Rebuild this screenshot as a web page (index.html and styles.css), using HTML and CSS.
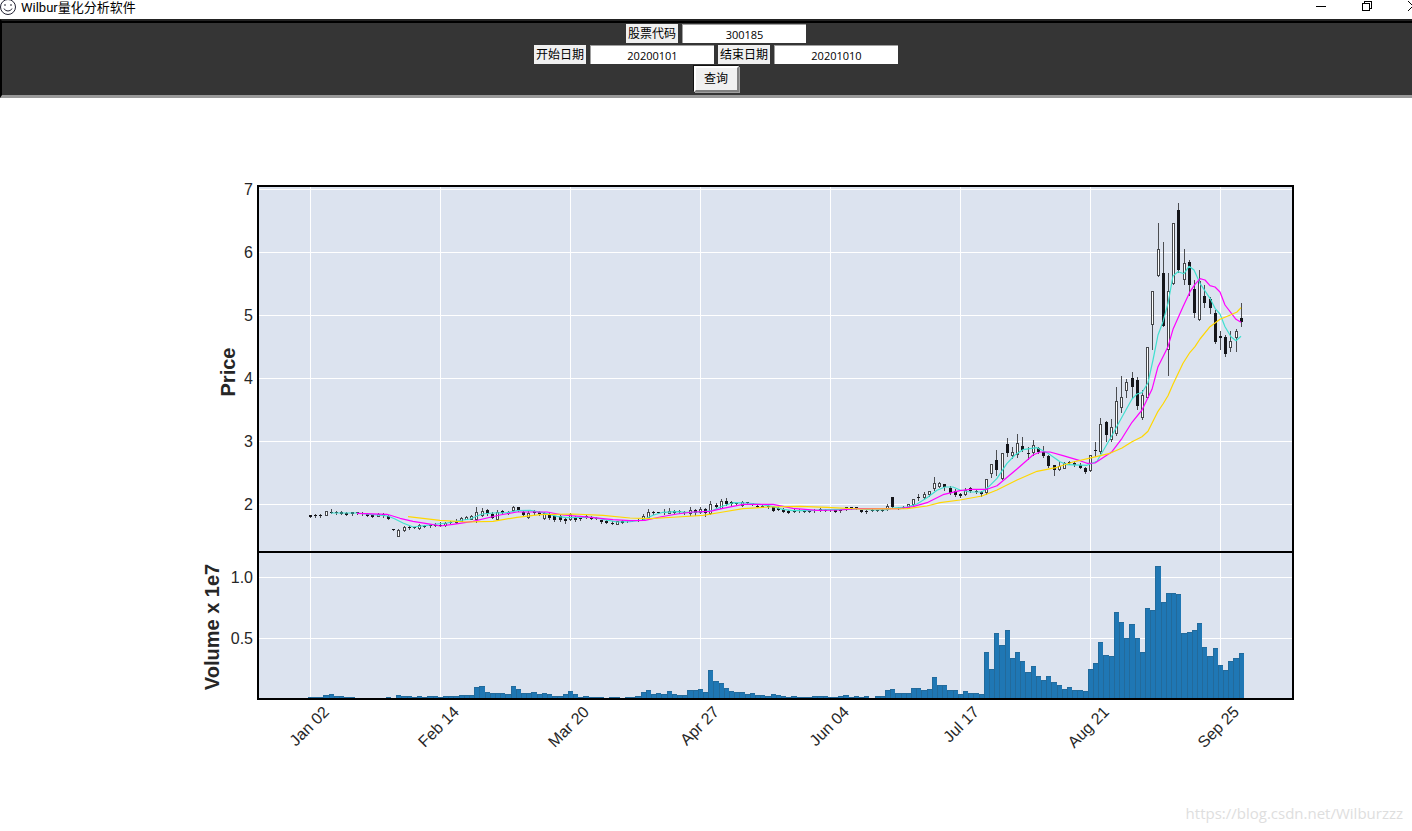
FILE: index.html
```html
<!DOCTYPE html>
<html lang="zh-CN">
<head>
<meta charset="utf-8">
<title>Wilbur量化分析软件</title>
<link rel="stylesheet" href="styles.css">
</head>
<body>
<div class="window">
  <header class="titlebar">
    <svg class="app-icon" viewBox="0 0 16 16" aria-hidden="true">
      <circle cx="8" cy="8" r="7.5"/>
      <path d="M5 5v2M11 5v2M4 9.5Q5 12 8 12T12 9.5"/>
    </svg>
    <h1 class="title">Wilbur量化分析软件</h1>
    <div class="controls">
      <button class="control" type="button" aria-label="最小化"><svg viewBox="0 0 12 12"><path d="M1 6.5h10"/></svg></button>
      <button class="control" type="button" aria-label="还原"><svg viewBox="0 0 12 12"><path d="M1.5 3.5h7v7h-7zM3.5 3.5v-2h7v7h-2"/></svg></button>
      <button class="control" type="button" aria-label="关闭"><svg viewBox="0 0 12 12"><path d="M1 1l10 10M11 1L1 11"/></svg></button>
    </div>
  </header>
  <form class="toolbar">
    <div class="row">
      <label class="label" for="code">股票代码</label>
      <input class="entry" id="code" type="text" value="300185">
    </div>
    <div class="row">
      <label class="label" for="start">开始日期</label>
      <input class="entry" id="start" type="text" value="20200101">
      <label class="label" for="end">结束日期</label>
      <input class="entry" id="end" type="text" value="20201010">
    </div>
    <button class="query" type="button">查询</button>
  </form>
  <main class="figure">
    <svg class="chart" id="chart" viewBox="0 98 1432 733" role="img" aria-label="Price and volume"></svg>
    <a class="watermark" href="https://blog.csdn.net/Wilburzzz">https://blog.csdn.net/Wilburzzz</a>
  </main>
</div>
<script src="chart.js"></script>
</body>
</html>
```
FILE: styles.css
```css
* { box-sizing: border-box; }

body {
  margin: 0;
  overflow: hidden;
  background: #fff;
  color: #000;
  font: 12px/16px "Open Sans", "Noto Sans CJK SC", sans-serif;
}

/* The window runs 20px past the right edge of the screen. */
.window { width: calc(100% + 20px); }

.titlebar {
  display: flex;
  align-items: flex-start;
  height: 19px;
  gap: 5px;
}
.app-icon {
  width: 16px;
  height: 16px;
  margin-top: -1px;
  fill: #fff;
  stroke: #222233;
  stroke-width: 1;
}
.title {
  margin: 0;
  font: 400 13px/15px Roboto, "Noto Sans CJK SC", sans-serif;
}
.controls { display: flex; margin-left: auto; }
.control {
  display: flex;
  justify-content: center;
  width: 46px;
  height: 16px;
  padding: 0;
  border: 0;
  background: none;
}
.control:last-child { width: 42px; padding-left: 4px; }
.control svg {
  width: 12px;
  height: 12px;
  fill: none;
  stroke: #000;
  shape-rendering: crispEdges;
}

.toolbar {
  display: flex;
  flex-direction: column;
  align-items: center;
  gap: 2px;
  padding: 3px 2px 3px 0;
  border-top: 2px solid #222;
  border-left: 2px solid #000;
  border-bottom: 3px solid #999;
  background: #353535;
  box-shadow: inset 0 2px #000;
}
.row { display: flex; gap: 4px; }
.label {
  width: 52px;
  height: 19px;
  background: #f0f0f0;
  line-height: 19px;
  text-align: center;
}
.entry {
  width: 124px;
  height: 19px;
  padding: 0;
  border: 0 solid #a0a0a0;
  border-width: 1px 0 0 1px;
  background: #fff;
  color: #000;
  font: inherit;
  font-size: 11px;
  text-align: center;
}
.query {
  width: 45px;
  height: 26px;
  padding: 0;
  border: 2px solid;
  border-color: #fff #808080 #808080 #fff;
  background: #f0f0f0;
  box-shadow: -1px -1px #111, 1px 1px #a0a0a0;
  color: #000;
  font: inherit;
}

.figure { position: relative; }
.chart {
  display: block;
  width: 100%;
  font-family: "Liberation Sans", Arial, sans-serif;
}
.plot { fill: #dce3ef; }
.grid { fill: none; stroke: #fff; stroke-width: 1; shape-rendering: crispEdges; }
.frame { fill: none; stroke: #000; stroke-width: 2; shape-rendering: crispEdges; }
.tick { fill: #262626; font-size: 16px; }
.tick-end { text-anchor: end; }
.axis { fill: #262626; font-size: 20px; font-weight: 700; text-anchor: middle; }
.bar { fill: #1f77b4; shape-rendering: crispEdges; }
.bar-edge { fill: none; stroke: #226a9b; stroke-width: 1; shape-rendering: crispEdges; }
.wick { stroke: #4b4d51; stroke-width: 1; shape-rendering: crispEdges; }
.up { fill: #fff; stroke: #45474b; stroke-width: 1; shape-rendering: crispEdges; }
.down { fill: #14151a; shape-rendering: crispEdges; }
.ma { fill: none; stroke-width: 1.2; stroke-linejoin: round; }
.ma-fast { stroke: #40e0d0; }
.ma-mid { stroke: #ff00ff; }
.ma-slow { stroke: #ffd700; }

.watermark {
  position: absolute;
  right: 29px;
  bottom: 8px;
  color: #dedede;
  font: 15px/20px "Open Sans", sans-serif;
  text-decoration: none;
}
```
FILE: chart.js
```js
// One entry per trading day: u(p) or d(own), then high, body top, body bottom, low.
const candles = `
d515,515,517,517 d514,515,516,517 d514,515,516,517 u511,511,515,515 d509,512,513,513
d511,512,513,514 d511,512,514,514 d512,513,515,515 d512,512,514,515 d512,512,513,514
d512,513,514,515 d513,514,516,516 d514,514,517,517 u513,514,516,516 d513,514,516,517
d515,516,519,519 d529,529,530,530 u529,530,536,536 u526,527,530,531 d526,527,528,529
d527,527,528,528 u524,525,528,529 d525,526,527,527 d525,525,526,527 d523,525,526,526
d522,525,526,526 u522,523,525,526 d521,522,523,523 u519,521,522,523 u517,518,521,521
u516,517,519,519 u515,516,519,519 u507,512,519,522 u508,511,515,516 d509,510,514,515
d512,514,518,518 u510,512,519,519 d510,511,513,514 d511,512,514,514 u506,507,510,511
d507,507,510,511 d511,512,515,516 u511,513,517,518 d510,511,513,514 d511,512,514,515
u512,513,518,519 d513,514,518,519 d515,516,520,521 d514,516,520,521 d517,519,521,523
u513,514,519,520 d516,517,520,521 d516,517,519,520 d515,516,517,518 d516,517,519,519
d517,518,519,519 d520,520,522,523 d520,521,523,523 d521,523,524,524 u521,521,524,524
d520,521,523,523 d520,520,521,522 d520,520,521,521 d519,520,521,521 u514,516,519,519
u509,512,517,517 d511,512,513,514 d512,512,513,513 d509,512,513,514 u508,511,513,513
d510,511,513,513 d510,511,512,513 d511,512,513,514 u507,510,513,515 d509,510,513,515
u507,509,512,513 d508,509,513,516 u501,504,513,514 d503,505,507,508 u499,501,508,508
d498,501,504,505 d501,502,504,505 d503,503,504,505 u501,502,505,506 d502,502,503,504
d503,503,504,505 d505,506,507,507 u505,506,507,507 d505,506,507,508 d506,507,511,511
d507,508,510,510 d508,509,512,512 d510,511,513,513 d509,510,512,512 d509,510,511,512
d510,511,512,512 d510,511,512,512 d509,510,511,512 d508,509,511,511 d509,510,511,511
d509,509,510,511 d509,510,512,512 d509,510,511,512 d508,507,508,510 d507,507,508,509
d507,507,509,509 d510,510,512,512 d510,511,512,513 d509,510,511,511 d510,510,511,511
d509,510,511,511 u504,506,509,510 d497,497,507,508 d507,508,509,509 d506,507,508,508
u504,504,507,508 u499,499,504,505 d494,497,498,500 u492,494,497,499 u491,491,494,496
u477,483,488,490 u482,483,486,487 d484,484,487,490 d486,488,493,494 d489,491,495,496
d493,494,496,497 u488,490,494,495 d487,488,491,492 d490,491,492,493 d491,492,494,496
u479,479,492,494 u464,464,473,477 d450,460,470,475 u453,453,478,479 d438,444,453,456
u447,452,455,458 u434,443,454,457 d437,446,450,451 d447,453,454,459 u440,445,452,455
d447,448,452,453 d446,452,456,457 d455,456,466,467 d465,465,470,475 u461,466,469,470
u462,463,468,468 d461,462,463,464 d461,463,465,466 d463,465,468,468 d467,468,472,473
u455,455,470,471 d442,450,451,456 u418,424,451,453 d421,422,435,441 u419,427,439,441
u387,401,433,435 u376,397,407,412 u379,382,390,397 d372,378,387,397 d377,380,406,409
u390,395,417,419 u347,347,397,398 u291,291,324,349 u223,249,275,276 d242,273,326,326
u273,291,349,375 u223,223,283,284 d203,210,270,272 u249,263,279,284 d260,262,285,295
d280,289,313,317 u270,281,319,320 d285,296,303,307 d297,299,308,313 d310,313,342,343
d331,336,338,349 d335,337,354,356 u331,341,347,351 u329,331,337,351 d303,318,322,326
`.trim().split(/\s+/).map(s => [s[0], ...s.slice(1).split(',').map(Number)]);

const volumes = [
  1,1,1,3,4,2,2,1,1,0,0,0,0,0,0,1,0,3,2,2,1,2,1,2,2,1,2,2,2,3,3,3,11,12,6,5,5,5,4,12,
  9,5,5,6,4,5,4,2,2,4,7,4,1,2,1,1,1,0,1,1,0,1,1,2,6,8,4,5,4,7,4,3,3,8,8,9,6,28,17,15,
  10,7,6,6,4,5,3,3,2,4,3,2,1,2,1,1,1,2,2,2,1,1,2,3,1,2,1,2,0,2,2,8,9,5,5,5,10,10,8,9,
  21,13,13,8,8,4,7,5,5,4,46,29,65,53,68,40,46,37,26,32,22,18,22,16,13,9,11,8,8,7,
  29,35,56,43,42,86,76,60,74,60,46,90,88,132,96,105,105,104,65,66,68,75,51,42,50,33,28,37,40,45
];

const averages = {
  'ma-fast': '331,513 356,513 373,514.7 388,516 395,519 403,523 413,527 425,525.7 437,524 447,523 457,521 470,519 482,514 493,513 507,512.7 517,510.7 530,510.3 543,512.7 557,516.3 567,517.7 580,517.3 593,517.3 603,519.3 617,522 630,521.7 643,520 653,515.3 663,512.3 677,511.7 687,512.3 700,512 712,510.7 723,506 733,502.7 747,503 760,504.3 773,506.7 783,509.3 793,510.7 810,510.7 827,509.7 843,509.3 860,508.7 873,510 887,509.7 893,508 907,507 917,504 927,497.7 937,490.3 945,487 953,487 960,490 970,492 982,492 988,487.3 997,478.3 1007,463.3 1015,455 1023,449.7 1037,447.7 1048,453.3 1060,461.7 1067,464.7 1087,465.3 1097,461.3 1110,439 1122,417 1132,399 1137,394 1142,392.7 1148,382.7 1153,360 1158,335 1163,321.7 1168,303.3 1173,276 1178,271.7 1184,273.7 1189,266.3 1194,270 1200,283.3 1210,298.3 1215,308.3 1220,314 1225,326.7 1231,336.7 1236,340.7 1241,336.3',
  'ma-mid': '357,513.3 387,514.3 400,518.3 413,521.3 433,524.7 440,526 453,524.3 473,521.3 487,518 500,515 517,512 547,512 563,515 583,516.7 613,519.7 630,520.7 645,520.3 660,517 677,514 693,512 710,511.3 723,508.3 743,504.3 773,504.3 793,508.3 817,510.3 840,510 857,508.7 900,508.7 913,506.7 927,502.7 943,494.7 960,490.7 970,489.3 987,489.3 997,485.7 1017,469 1033,455 1040,452 1050,452 1063,455.7 1080,460.7 1087,463.3 1095,463 1112,451.7 1122,438.3 1132,422.3 1142,410 1152,389.3 1158,366.7 1168,346.7 1173,329.3 1183,306.7 1190,291.7 1195,284.3 1200,278.7 1205,280 1210,285.7 1215,287 1220,292 1225,305 1236,319.3 1241,322.3',
  'ma-slow': '408,516.7 440,520.3 467,522 493,521.3 517,517.3 540,514.7 573,514 603,515.3 630,518 650,518.7 677,517 703,515.3 723,512 743,508.7 769,507 800,506.3 827,507.3 860,509 907,508.7 927,506 940,502.7 960,500 982,496 997,490 1017,480 1037,471.3 1057,467.3 1073,462 1093,457.3 1110,453.3 1122,448 1132,441.7 1142,436.7 1148,431.3 1153,421.3 1158,411.3 1163,404 1168,395.7 1173,384.3 1183,363.3 1190,352.3 1195,346.7 1200,339 1210,326.7 1220,319.3 1231,314.7 1237,312 1241,307.7'
};

const days = ['Jan 02', 'Feb 14', 'Mar 20', 'Apr 27', 'Jun 04', 'Jul 17', 'Aug 21', 'Sep 25'];
const plot = { left: 258, right: 1293, top: 186, split: 552, bottom: 699 };
const step = 5.2;
const first = 310.4;
const out = [];

out.push(`<rect class="plot" x="${plot.left}" y="${plot.top}" width="${plot.right - plot.left}" height="${plot.bottom - plot.top}"/>`);

days.forEach((day, i) => {
  const x = 310 + i * 130;
  out.push(`<path class="grid" d="M${x + 0.5} ${plot.top}V${plot.bottom}"/>`);
  out.push(`<text class="tick tick-end" transform="translate(${x + 20} 713) rotate(-45)">${day}</text>`);
});

for (let p = 2; p <= 7; p++) {
  const y = 504 - (p - 2) * 63;
  out.push(`<path class="grid" d="M${plot.left} ${y + 0.5}H${plot.right}"/>`);
  out.push(`<text class="tick tick-end" x="253" y="${y + 6}">${p}</text>`);
}
[['1.0', 577], ['0.5', 638]].forEach(([label, y]) => {
  out.push(`<path class="grid" d="M${plot.left} ${y + 0.5}H${plot.right}"/>`);
  out.push(`<text class="tick tick-end" x="253" y="${y + 6}">${label}</text>`);
});

volumes.forEach((h, i) => {
  if (!h) return;
  const x = Math.round(first + (i - 0.5) * step);
  const next = Math.round(first + (i + 0.5) * step);
  const top = 698 - h;
  out.push(`<rect class="bar" x="${x}" y="${top}" width="${next - x}" height="${h}"/>`);
  out.push(`<path class="bar-edge" d="M${x + 0.5} 698V${top + 0.5}H${next}"/>`);
});

candles.forEach(([kind, high, top, bottom, low], i) => {
  const x = Math.floor(first + i * step) + 0.5;
  out.push(`<path class="wick" d="M${x} ${high}V${low + 1}"/>`);
  out.push(kind === 'u'
    ? `<rect class="up" x="${x - 1}" y="${top + 0.5}" width="2" height="${bottom - top}"/>`
    : `<rect class="down" x="${x - 1.5}" y="${top}" width="3" height="${bottom - top}"/>`);
});

for (const [name, points] of Object.entries(averages)) {
  out.push(`<polyline class="ma ${name}" points="${points}"/>`);
}

out.push(`<path class="frame" d="M${plot.left} ${plot.top}H${plot.right}V${plot.bottom}H${plot.left}ZM${plot.left} ${plot.split}H${plot.right}"/>`);
out.push('<text class="axis" transform="translate(235 372) rotate(-90)">Price</text>');
out.push('<text class="axis" transform="translate(219 627) rotate(-90)">Volume x 1e7</text>');

document.getElementById('chart').innerHTML = out.join('');
```
